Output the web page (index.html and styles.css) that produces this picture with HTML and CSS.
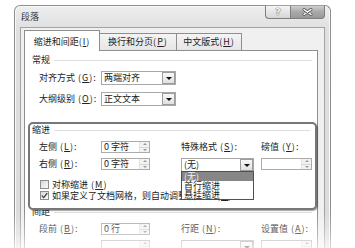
FILE: index.html
```html
<!DOCTYPE html>
<html lang="zh-CN">
<head>
    <meta charset="UTF-8">
    <meta name="viewport" content="width=device-width, initial-scale=1.0">
    <title>段落</title>
    <link rel="stylesheet" href="styles.css">
</head>
<body>
    <div class="window">
        <div class="titlebar">
            <span class="title">段落</span>
            <div class="caption-buttons">
                <div class="btn-help">?</div>
                <div class="btn-close">
                    <svg width="11" height="8" viewBox="0 0 11 8">
                        <path d="M2 1.5 L9 6.5 M9 1.5 L2 6.5" stroke="#5a5a5a" stroke-width="3" stroke-linecap="round"/>
                        <path d="M2 1.5 L9 6.5 M9 1.5 L2 6.5" stroke="#fff" stroke-width="1.5" stroke-linecap="round"/>
                    </svg>
                </div>
            </div>
        </div>

        <div class="client">
            <div class="tabs">
                <div class="tab active">缩进和间距<span class="key">(<u>I</u>)</span></div>
                <div class="tab tab-second">换行和分页<span class="key">(<u>P</u>)</span></div>
                <div class="tab tab-third">中文版式<span class="key">(<u>H</u>)</span></div>
            </div>

            <div class="panel">
                <div class="group-title"><span>常规</span><i class="rule"></i></div>
                <div class="general">
                    <span class="label">对齐方式<span class="key"> (<u>G</u>):</span></span>
                    <div class="combo"><span>两端对齐</span><b class="drop"></b></div>
                    <span class="label">大纲级别<span class="key"> (<u>O</u>):</span></span>
                    <div class="combo"><span>正文文本</span><b class="drop"></b></div>
                </div>

                <!-- highlighted indent group -->
                <div class="indent-frame">
                    <div class="group-title"><span>缩进</span><i class="rule"></i></div>
                    <div class="fields">
                        <span class="label">左侧<span class="key"> (<u>L</u>):</span></span>
                        <div class="spin"><span class="value">0 字符</span><span class="spin-btns"><i class="up"></i><i class="down"></i></span></div>
                        <span class="label">特殊格式<span class="key"> (<u>S</u>):</span></span>
                        <span class="label">磅值<span class="key"> (<u>Y</u>):</span></span>

                        <span class="label">右侧<span class="key"> (<u>R</u>):</span></span>
                        <div class="spin"><span class="value">0 字符</span><span class="spin-btns"><i class="up"></i><i class="down"></i></span></div>
                        <div class="combo combo-special">
                            <span>(无)</span><b class="drop"></b>
                            <ul class="dropdown-list">
                                <li class="selected">(无)</li>
                                <li>首行缩进</li>
                                <li>悬挂缩进</li>
                            </ul>
                        </div>
                        <div class="spin spin-wide"><span class="value"></span><span class="spin-btns"><i class="up"></i><i class="down"></i></span></div>
                    </div>
                    <div class="check check-first"><span class="box"></span>对称缩进<span class="key"> (<u>M</u>)</span></div>
                    <div class="check">
                        <span class="box">
                            <svg width="7" height="7" viewBox="0 0 7 7"><path d="M0.8 3.6 L2.8 5.6 L6.2 1.2" fill="none" stroke="#3a3a3a" stroke-width="1.3"/></svg>
                        </span>如果定义了文档网格，则自动调整右缩进<span class="key"> (<u>D</u>)</span>
                    </div>
                </div>

                <div class="group-title spacing-title"><span>间距</span><i class="rule"></i></div>
                <div class="fields spacing">
                    <span class="label">段前<span class="key"> (<u>B</u>):</span></span>
                    <div class="spin"><span class="value">0 行</span><span class="spin-btns"><i class="up"></i><i class="down"></i></span></div>
                    <span class="label">行距<span class="key"> (<u>N</u>):</span></span>
                    <span class="label">设置值<span class="key"> (<u>A</u>):</span></span>

                    <span class="label"></span>
                    <div class="spin"><span class="value"></span><span class="spin-btns"><i class="up"></i><i class="down"></i></span></div>
                    <div class="combo combo-special"><span></span><b class="drop"></b></div>
                    <div class="spin spin-wide"><span class="value"></span><span class="spin-btns"><i class="up"></i><i class="down"></i></span></div>
                </div>
            </div>
        </div>
    </div>
    <div class="fade"></div>
</body>
</html>
```

FILE: styles.css
```css
* {
    margin: 0;
    padding: 0;
    box-sizing: border-box;
}

body {
    width: 355px;
    height: 248px;
    overflow: hidden;
    background: #fff;
    color: #222;
    font-family: "Noto Sans CJK SC", "Liberation Sans", sans-serif;
    font-size: 9px;
    line-height: 10px;
}

u {
    text-decoration-thickness: 1px;
    text-underline-offset: 1px;
}

/* latin part of a label, like the access key "(G):" */
.key {
    letter-spacing: 1px;
    white-space: pre;
}

/* window frame */
.window {
    margin: 5px 0 0 14px;
    width: 317px;
    height: 260px;
    border: 1px solid #8e8e8e;
    border-bottom: none;
    border-radius: 6px 6px 0 0;
    background: linear-gradient(to bottom, #eeeeee, #e0e0e0 22px, #dadada);
    box-shadow: inset 1px 1px 0 #f8f8f8, inset -1px 0 0 #f8f8f8;
}

.titlebar {
    height: 21px;
    display: flex;
    justify-content: space-between;
    align-items: flex-start;
    padding: 0 5px 0 6px;
}

.title {
    padding-top: 6px;
    color: #333;
}

.caption-buttons {
    display: flex;
    margin-top: -1px;
}

.btn-help,
.btn-close {
    height: 14px;
    border: 1px solid #7e7e7e;
    border-top-color: #a0a0a0;
    display: flex;
    align-items: center;
    justify-content: center;
}

.btn-help {
    width: 25px;
    border-right: none;
    border-radius: 0 0 0 4px;
    background: linear-gradient(#f6f6f6, #e4e4e4 50%, #d6d6d6);
    font-family: "DejaVu Sans", sans-serif;
    font-size: 9px;
    font-weight: bold;
    color: #fafafa;
    text-shadow: 0 0 1px #555, 0 0 1px #555;
}

.btn-close {
    width: 35px;
    border-radius: 0 0 4px 0;
    background: linear-gradient(#cfcfcf, #a8a8a8 50%, #9a9a9a);
}

/* client area */
.client {
    margin: 0 5px;
    height: 235px;
    border: 1px solid #a3a3a3;
    border-bottom: none;
    background: #f0f0f0;
    padding: 2px 6px 0 3px;
}

.tabs {
    display: flex;
    align-items: flex-end;
    height: 20px;
}

.tab {
    height: 17px;
    padding-top: 3px;
    border: 1px solid #8e8e8e;
    border-bottom: none;
    border-left: none;
    background: linear-gradient(#f4f4f4, #e6e6e6);
    text-align: center;
}

.tab.active {
    position: relative;
    z-index: 1;
    width: 76px;
    height: 21px;
    margin-bottom: -1px;
    padding-top: 6px;
    border-left: 1px solid #8e8e8e;
    background: #fff;
}

.tab-second {
    width: 77px;
}

.tab-third {
    width: 65px;
}

.panel {
    height: 215px;
    border: 1px solid #8e8e8e;
    border-bottom: none;
    background: #fff;
    padding-top: 4px;
}

.group-title {
    display: flex;
    align-items: center;
    padding-left: 7px;
}

.rule {
    flex: 1;
    height: 1px;
    margin: 1px 5px 0 4px;
    background: #dedede;
}

.general {
    display: grid;
    grid-template-columns: 62px 75px;
    grid-auto-rows: 14px;
    row-gap: 7px;
    align-items: center;
    margin-top: 6px;
    padding-left: 14px;
}

.label {
    white-space: nowrap;
}

/* combo box */
.combo {
    position: relative;
    width: 75px;
    height: 14px;
    border: 1px solid #a8a8a8;
    background: #fff;
    display: flex;
    align-items: center;
    padding-left: 2px;
}

.combo > span {
    flex: 1;
}

.drop {
    width: 13px;
    height: 12px;
    border: 1px solid #9c9c9c;
    background: linear-gradient(#f8f8f8, #e0e0e0);
    display: flex;
    align-items: center;
    justify-content: center;
}

.drop::after {
    content: "";
    border-left: 3px solid transparent;
    border-right: 3px solid transparent;
    border-top: 3px solid #111;
}

.combo-special {
    width: 73px;
}

.dropdown-list {
    position: absolute;
    z-index: 2;
    top: 100%;
    left: -1px;
    width: 73px;
    border: 1px solid #505050;
    background: #fff;
    list-style: none;
}

.dropdown-list li {
    height: 9px;
    line-height: 9px;
    padding-left: 2px;
}

.dropdown-list li.selected {
    background: #868686;
    color: #f4f4f4;
}

/* spinner */
.spin {
    width: 49px;
    height: 12px;
    border: 1px solid #ababab;
    background: #fff;
    display: flex;
    align-items: center;
    padding-left: 2px;
}

.spin-wide {
    width: 51px;
}

.spin .value {
    flex: 1;
}

.spin-btns {
    width: 10px;
    height: 10px;
    display: flex;
    flex-direction: column;
    background: #f2f2f2;
    border-left: 1px solid #e2e2e2;
}

.spin-btns i {
    flex: 1;
    display: flex;
    align-items: center;
    justify-content: center;
}

.spin-btns .up {
    border-bottom: 1px solid #d6d6d6;
}

.spin-btns .up::after,
.spin-btns .down::after {
    content: "";
    border-left: 2px solid transparent;
    border-right: 2px solid transparent;
}

.spin-btns .up::after {
    border-bottom: 2px solid #9a9a9a;
}

.spin-btns .down::after {
    border-top: 2px solid #9a9a9a;
}

/* indent group with highlight frame */
.indent-frame {
    position: relative;
    z-index: 1;
    height: 88px;
    margin: 16px 0 0 3px;
    border: 2px solid #777;
    border-radius: 5px;
    background: #fff;
    box-shadow: 1px 1px 1px rgba(0, 0, 0, 0.35);
}

.indent-frame .group-title {
    margin-top: 1px;
    padding-left: 2px;
}

.fields {
    display: grid;
    grid-template-columns: 62px 80px 80px 51px;
    grid-template-rows: 12px 14px;
    row-gap: 5px;
    align-items: start;
    margin-top: 6px;
    padding-left: 9px;
}

.fields .label {
    line-height: 12px;
}

.check {
    display: flex;
    align-items: center;
    height: 11px;
    padding-left: 10px;
    white-space: nowrap;
}

.check-first {
    margin-top: 7px;
}

.box {
    width: 9px;
    height: 9px;
    margin-right: 3px;
    border: 1px solid #8e8e8e;
    background: linear-gradient(135deg, #d8d8d8, #fbfbfb);
    display: flex;
    align-items: center;
    justify-content: center;
}

.spacing-title {
    margin-top: -3px;
}

.spacing {
    padding-left: 14px;
}

/* soft fade at the bottom of the picture */
.fade {
    position: absolute;
    left: 0;
    right: 0;
    bottom: 0;
    height: 36px;
    background: linear-gradient(rgba(255, 255, 255, 0), rgba(255, 255, 255, 0.35) 60%, rgba(255, 255, 255, 0.7));
}
```
